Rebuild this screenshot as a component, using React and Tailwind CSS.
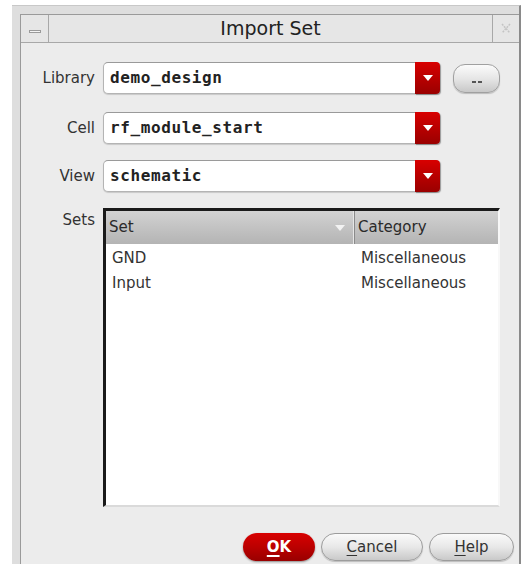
import React from 'react';

const uiFont = { fontFamily: '"DejaVu Sans", "Liberation Sans", sans-serif' };
const monoFont = { fontFamily: '"DejaVu Sans Mono", "Liberation Mono", monospace' };

// red dropdown combo used for Library / Cell / View
const Combo = ({ value }) => (
    <div className="flex h-[32px] w-[337px] rounded-[5px] border border-[#b4b4b4] border-t-[#9a9a9a] bg-white shadow-[0_1px_1px_rgba(0,0,0,0.15)]">
        <div className="flex flex-1 items-center pl-[6px] text-[16px] font-bold text-[#222] tracking-[0.6px]" style={monoFont}>
            {value}
        </div>
        <div className="flex w-[25px] items-center justify-center rounded-r-[4px] bg-gradient-to-b from-[#d80000] via-[#b80000] to-[#9a0000] -my-px -mr-px shadow-[1px_1px_1px_rgba(0,0,0,0.35)]">
            <svg width="10" height="7" viewBox="0 0 10 7">
                <path d="M0 0 L10 0 L5 6 Z" fill="#ffffff" />
            </svg>
        </div>
    </div>
);

const Label = ({ children, className = '' }) => (
    <div className={`w-[74px] shrink-0 text-right text-[15px] text-[#333] ${className}`} style={uiFont}>
        {children}
    </div>
);

const PillButton = ({ children, className = '' }) => (
    <button
        className={`flex h-[28px] items-center justify-center rounded-full border border-[#9c9c9c] bg-gradient-to-b from-[#fafafa] via-[#e8e8e8] to-[#c9c9c9] text-[15px] text-[#333] shadow-[0_1px_1px_rgba(0,0,0,0.2)] ${className}`}
        style={uiFont}
    >
        {children}
    </button>
);

const App = () => {
    const rows = [
        { set: 'GND', category: 'Miscellaneous' },
        { set: 'Input', category: 'Miscellaneous' },
    ];

    return (
        <div className="w-[531px] h-[578px] bg-white pt-[5px] pl-[12px]">
            {/* window frame */}
            <div className="flex h-[559px] w-[509px] flex-col border-t border-[#c8c8c8] border-r-2 border-r-[#8a8a8a] bg-[#dedede] pl-[8px] pt-[8px]">
                <div className="flex flex-1 flex-col border-l border-t border-[#9a9a9a] bg-[#ececec]">
                    {/* title bar */}
                    <div className="flex h-[28px] border-b border-[#a8a8a8] bg-[#e6e6e6]">
                        <div className="flex w-[28px] items-end justify-center border-r border-[#a8a8a8] pb-[9px]">
                            <div className="h-[3px] w-[12px] border border-[#9a9a9a] bg-[#f4f4f4]" />
                        </div>
                        <div className="flex flex-1 items-center justify-center text-[19px] text-[#222]" style={uiFont}>
                            Import Set
                        </div>
                        <div className="flex w-[27px] items-center justify-center border-l border-[#a8a8a8]">
                            <svg width="12" height="13" viewBox="0 0 12 13">
                                <path d="M2 2 L10 11 M10 2 L2 11" stroke="#c4c4c4" strokeWidth="1.5" strokeDasharray="2 1" fill="none" />
                            </svg>
                        </div>
                    </div>

                    {/* form */}
                    <div className="flex flex-1 flex-col pt-[19px] pr-[4px]">
                        <div className="flex items-center">
                            <Label>Library</Label>
                            <div className="ml-[8px]">
                                <Combo value="demo_design" />
                            </div>
                            <button className="ml-[13px] flex h-[29px] w-[47px] items-end justify-center gap-[2px] rounded-[12px] border border-[#a0a0a0] bg-gradient-to-b from-[#fbfbfb] via-[#e6e6e6] to-[#c8c8c8] pb-[9px] shadow-[0_1px_1px_rgba(0,0,0,0.2)]">
                                <span className="block h-[2px] w-[4px] bg-[#555]" />
                                <span className="block h-[2px] w-[4px] bg-[#555]" />
                            </button>
                        </div>

                        <div className="mt-[18px] flex items-center">
                            <Label>Cell</Label>
                            <div className="ml-[8px]">
                                <Combo value="rf_module_start" />
                            </div>
                        </div>

                        <div className="mt-[16px] flex items-center">
                            <Label>View</Label>
                            <div className="ml-[8px]">
                                <Combo value="schematic" />
                            </div>
                        </div>

                        {/* sets table */}
                        <div className="mt-[16px] flex">
                            <Label className="pt-[1px]">Sets</Label>
                            <div className="ml-[8px] flex h-[299px] w-[397px] flex-col border-l-[3px] border-t-[3px] border-r-2 border-b-2 border-l-[#1a1a1a] border-t-[#1a1a1a] border-r-[#f8f8f8] border-b-[#dadada] bg-white">
                                <div className="flex h-[33px] bg-gradient-to-b from-[#d2d2d2] to-[#b4b4b4] text-[15px] text-[#2a2a2a]" style={uiFont}>
                                    <div className="flex w-[248px] items-center justify-between border-r border-r-[#e6e6e6] pl-[3px] pr-[8px] shadow-[1px_0_0_#8a8a8a]">
                                        <span>Set</span>
                                        <svg width="10" height="6" viewBox="0 0 10 6">
                                            <path d="M0 0 L10 0 L5 6 Z" fill="#f2f2f2" />
                                        </svg>
                                    </div>
                                    <div className="flex flex-1 items-center pl-[4px]">Category</div>
                                </div>
                                <div className="pt-[2px] text-[15px] text-[#333]" style={uiFont}>
                                    {rows.map((row) => (
                                        <div key={row.set} className="flex h-[25px] items-center">
                                            <div className="w-[255px] pl-[6px]">{row.set}</div>
                                            <div>{row.category}</div>
                                        </div>
                                    ))}
                                </div>
                            </div>
                        </div>

                        {/* buttons */}
                        <div className="mt-[26px] flex justify-end gap-[6px] pr-[1px]">
                            <button
                                className="flex h-[28px] w-[72px] items-center justify-center rounded-full bg-gradient-to-b from-[#d80000] via-[#bb0000] to-[#980000] text-[15px] font-bold text-white shadow-[0_1px_2px_rgba(0,0,0,0.4)]"
                                style={uiFont}
                            >
                                <span className="underline underline-offset-[3px] decoration-[2px]">O</span>K
                            </button>
                            <PillButton className="w-[102px]">
                                <span className="underline underline-offset-[3px]">C</span>ancel
                            </PillButton>
                            <PillButton className="w-[85px]">
                                <span className="underline underline-offset-[3px]">H</span>elp
                            </PillButton>
                        </div>
                    </div>
                </div>
            </div>
        </div>
    );
};

export default App;
